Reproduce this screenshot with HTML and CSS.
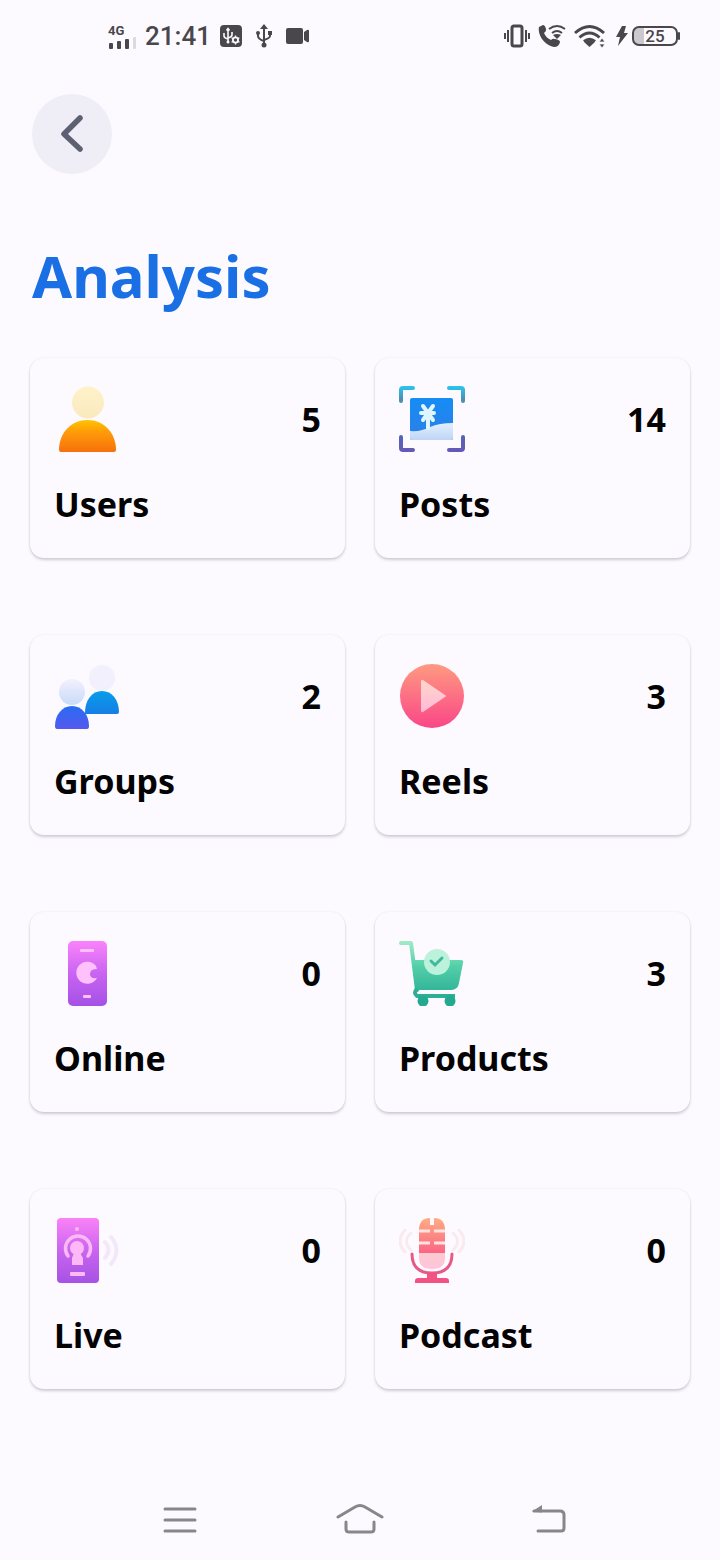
FILE: index.html
```html
<!DOCTYPE html>
<html lang="en">
<head>
<meta charset="utf-8">
<meta name="viewport" content="width=device-width, initial-scale=1">
<title>Analysis</title>
<link rel="stylesheet" href="styles.css">
</head>
<body>
<div class="screen">
  <div class="status">
    <div class="status-group">
      <div class="signal">
        <span class="network">4G</span>
        <svg width="28" height="12" viewBox="0 0 28 12" fill="#49474b"><rect x="1" y="6" width="4" height="6" rx="1"/><rect x="9" y="4" width="4" height="8" rx="1"/><rect x="17" y="2" width="4" height="10" rx="1"/><rect x="25" y="0" width="3" height="12" rx="1" fill="#dcdadd"/></svg>
      </div>
      <span class="clock">21:41</span>
      <svg width="22" height="22" viewBox="0 0 22 22"><rect width="22" height="22" rx="4" fill="#49474b"/><g fill="none" stroke="#fcfaff" stroke-width="1.6"><path d="M8 4V17M4 8v3q0 2 4 3M12 7v3q0 2-4 3M6.500 5.500 8 3.500l1.500 2"/><circle cx="15.500" cy="15" r="2.600" stroke-width="1.800"/><path d="M15.500 10.500v1.500M15.500 18v1.500M11.600 12.700l1.300.8M18.200 16.500l1.300.8M19.400 12.700l-1.300.8M12.900 16.500l-1.300.8" stroke-width="1.300"/></g><circle cx="8" cy="17" r="1.500" fill="#fcfaff"/></svg>
      <svg width="44" height="24" viewBox="0 0 44 24"><g fill="none" stroke="#49474b" stroke-width="2"><path d="M22 3v18M16 9v3q0 3 6 5M28 9v3q0 2-6 4"/></g><path d="M22 0l4 5h-8zM26 7h4v4h-4z" fill="#49474b"/><circle cx="16" cy="9" r="2" fill="#49474b"/><circle cx="22" cy="21" r="2.500" fill="#49474b"/></svg>
      <svg width="23" height="16" viewBox="0 0 23 16" fill="#49474b"><rect width="17" height="16" rx="2"/><path d="M18 4l3-2q2-1 2 1v10q0 2-2 1l-3-2z"/></svg>
    </div>
    <div class="status-group status-right">
      <svg width="26" height="24" viewBox="0 0 26 24" fill="none" stroke="#49474b" stroke-width="2"><rect x="8" y="2" width="10" height="20" rx="2" stroke-width="3"/><path d="M4 6v12M1 9v6M22 6v12M25 9v6"/></svg>
      <svg width="28" height="24" viewBox="0 0 28 24"><path d="M1 3 5 1q2 0 3 4 .5 2-2 4 2 5 7 7 2-2 4-1 5 1 5 3-1 5-6 5C8 22-1 12 1 3z" fill="#49474b"/><g fill="none" stroke="#49474b" stroke-width="2"><path d="M11 5q8-6 16 0M14 9q5-4 10 0"/></g><path d="M15 11q4-2 8 0l-4 4z" fill="#49474b"/></svg>
      <svg class="wifi" width="32" height="24" viewBox="0 0 32 24"><g fill="none" stroke="#49474b" stroke-width="3"><path d="M1 9q14.500-13 29 0M5.500 13.500q10-9 20 0M10 17.500q5.500-4.500 11 0"/></g><path d="M10.500 18.500q5-4 10 0L15.500 23z" fill="#49474b"/><path d="M28 14l3 4h-6zM25 20h6l-3 4z" fill="#49474b" stroke="#fcfaff" stroke-width=".8"/></svg>
      <svg width="14" height="22" viewBox="0 0 14 22"><path d="M7 1h4L9 8h4L3 21l2-9H1z" fill="#49474b"/></svg>
      <span class="battery">25</span>
    </div>
  </div>

  <header class="header">
    <button class="back" type="button" aria-label="Back"><svg width="40" height="40" viewBox="0 0 40 40"><path d="M28 4 12 20l16 15" transform="translate(0 0)" fill="none" stroke="#5d6072" stroke-width="5.500" stroke-linecap="round" stroke-linejoin="round"/></svg></button>
    <h1 class="title">Analysis</h1>
  </header>

  <main class="cards">
    <section class="card">
      <div class="card-top">
        <svg width="66" height="66" viewBox="0 0 66 66"><defs><linearGradient id="a1" x2="0" y2="1"><stop stop-color="#fff2c9"/><stop offset="1" stop-color="#f9e9bf"/></linearGradient><linearGradient id="a2" x2="0" y2="1"><stop stop-color="#ffc400"/><stop offset=".35" stop-color="#ff9d08"/><stop offset="1" stop-color="#f7700d"/></linearGradient></defs><circle cx="34" cy="16.500" r="16" fill="url(#a1)"/><path d="M5 64C5 47 17 34 33.500 34S62 47 62 64q0 2-2 2H7q-2 0-2-2z" fill="url(#a2)"/></svg>
        <span class="count">5</span>
      </div>
      <h2 class="label">Users</h2>
    </section>
    <section class="card">
      <div class="card-top">
        <svg width="66" height="66" viewBox="0 0 66 66"><defs><linearGradient id="b1" gradientUnits="userSpaceOnUse" x1="0" y1="0" x2="0" y2="66"><stop stop-color="#28c6f0"/><stop offset=".2" stop-color="#4c8fb5"/><stop offset=".8" stop-color="#5960b8"/><stop offset="1" stop-color="#6758b5"/></linearGradient><linearGradient id="b2" x2="0" y2="1"><stop stop-color="#168cf5"/><stop offset="1" stop-color="#2e7ee8"/></linearGradient><linearGradient id="b3" x2="0" y2="1"><stop stop-color="#e2f0ff"/><stop offset="1" stop-color="#bfd5f5"/></linearGradient></defs><path d="M2 15V4q0-2 2-2h10M50 2h12q2 0 2 2v11M2 51v11q0 2 2 2h10M50 64h12q2 0 2-2V51" fill="none" stroke="url(#b1)" stroke-width="4" stroke-linecap="round"/><rect x="11" y="12" width="43" height="42" rx="2" fill="url(#b2)"/><path d="M11 45q11 1 20-4 9-4 23-4v15q0 2-2 2H13q-2 0-2-2z" fill="url(#b3)"/><g stroke="#dff6ff" stroke-width="4" stroke-linecap="round"><path d="M29 27v15M22 27h13M24 20l10 14M34 20 24 34"/></g></svg>
        <span class="count">14</span>
      </div>
      <h2 class="label">Posts</h2>
    </section>
    <section class="card">
      <div class="card-top">
        <svg width="66" height="66" viewBox="0 0 66 66"><defs><linearGradient id="c1" x2="0" y2="1"><stop stop-color="#f2f0fd"/><stop offset="1" stop-color="#c9dbf9"/></linearGradient><linearGradient id="c2" x2="0" y2="1"><stop stop-color="#079de9"/><stop offset="1" stop-color="#167ee5"/></linearGradient><linearGradient id="c3" x2="0" y2="1"><stop stop-color="#286cf2"/><stop offset="1" stop-color="#5659ef"/></linearGradient></defs><circle cx="48" cy="15" r="13" fill="#f2f0fd"/><circle cx="18" cy="29" r="13" fill="url(#c1)"/><path d="M31 50C31 37 38 28 48 28s17 9 17 21q0 2-2 2H31z" fill="url(#c2)"/><path d="M1 63C1 52 8 43 18 43s17 9 17 20q0 3-2 3H3q-2 0-2-3z" fill="url(#c3)"/></svg>
        <span class="count">2</span>
      </div>
      <h2 class="label">Groups</h2>
    </section>
    <section class="card">
      <div class="card-top">
        <svg width="66" height="66" viewBox="0 0 66 66"><defs><linearGradient id="d1" x2="0" y2="1"><stop stop-color="#ff9a80"/><stop offset="1" stop-color="#fa4688"/></linearGradient><linearGradient id="d2" x2="0" y2="1"><stop stop-color="#ffd6cb"/><stop offset="1" stop-color="#ffb9d6"/></linearGradient></defs><circle cx="33" cy="33" r="32" fill="url(#d1)"/><path d="M22 19q0-3 2-2l22 15q2 1 0 2L24 49q-2 1-2-2z" fill="url(#d2)"/></svg>
        <span class="count">3</span>
      </div>
      <h2 class="label">Reels</h2>
    </section>
    <section class="card">
      <div class="card-top">
        <svg width="66" height="66" viewBox="0 0 66 66"><defs><linearGradient id="e1" x2="0" y2="1"><stop stop-color="#fb83fb"/><stop offset=".5" stop-color="#c964f2"/><stop offset="1" stop-color="#a451e5"/></linearGradient></defs><rect x="14" y="1" width="39" height="65" rx="5" fill="url(#e1)"/><g fill="#ffc1fb"><rect x="26" y="9" width="14" height="3" rx="1"/><path d="M42 26A11 11 0 1 0 43 38q-7 1-7-4t7-5z"/><rect x="29" y="55" width="8" height="3" rx="1"/></g></svg>
        <span class="count">0</span>
      </div>
      <h2 class="label">Online</h2>
    </section>
    <section class="card">
      <div class="card-top">
        <svg width="66" height="66" viewBox="0 0 66 66"><defs><linearGradient id="f1" gradientUnits="userSpaceOnUse" x1="0" y1="0" x2="0" y2="66"><stop stop-color="#a5ecc9"/><stop offset=".4" stop-color="#53cfa8"/><stop offset="1" stop-color="#1fa591"/></linearGradient></defs><path d="M2 3h10l6 47" fill="none" stroke="url(#f1)" stroke-width="4" stroke-linecap="round" stroke-linejoin="round"/><path d="M14 20h48q3 0 2 3l-4 20q-1 7-8 7H17z" fill="url(#f1)"/><path d="M18 49q-4 4 0 7h38" fill="none" stroke="#2caf96" stroke-width="4"/><circle cx="24" cy="61" r="5.500" fill="#24a991"/><circle cx="51" cy="61" r="5.500" fill="#24a991"/><circle cx="38" cy="22" r="13" fill="#bcf1dc"/><path d="m32 21 4 4 7-7" fill="none" stroke="#43b99c" stroke-width="3" stroke-linecap="round"/></svg>
        <span class="count">3</span>
      </div>
      <h2 class="label">Products</h2>
    </section>
    <section class="card">
      <div class="card-top">
        <svg width="66" height="66" viewBox="0 0 66 66"><defs><linearGradient id="g1" x2="0" y2="1"><stop stop-color="#fa82f7"/><stop offset=".5" stop-color="#c965ef"/><stop offset="1" stop-color="#a652e4"/></linearGradient></defs><rect x="3" y="1" width="42" height="65" rx="4" fill="url(#g1)"/><path d="M14 39a12.500 12.500 0 1 1 20 0" fill="none" stroke="#fcb9f5" stroke-width="3.500" stroke-linecap="round"/><g fill="#fcb9f5"><circle cx="23" cy="31" r="7"/><path d="M20 36h6l3 5v7H18v-7z"/><circle cx="23" cy="12" r="2"/><rect x="16" y="55" width="15" height="4" rx="1"/></g><path d="M51 25q7 8 0 16M57 20q11 13 0 27" fill="none" stroke="#f2e8fa" stroke-width="4" stroke-linecap="round"/></svg>
        <span class="count">0</span>
      </div>
      <h2 class="label">Live</h2>
    </section>
    <section class="card">
      <div class="card-top">
        <svg width="66" height="66" viewBox="0 0 66 66"><defs><linearGradient id="h1" x2="0" y2="1"><stop stop-color="#ffad82"/><stop offset="1" stop-color="#fa6387"/></linearGradient><linearGradient id="h2" x2="0" y2="1"><stop stop-color="#fbcbd0"/><stop offset="1" stop-color="#ffc4d9"/></linearGradient></defs><path d="M12 16q-9 8 0 17M6 13q-10 11 0 22M54 16q9 8 0 17M60 13q10 11 0 22" fill="none" stroke="#faeaf0" stroke-width="3" stroke-linecap="round"/><path d="M20 37V13Q20 1 31 1v7h4V1q11 0 11 12v24z" fill="url(#h1)"/><path d="M20 14h11M35 14h11M20 26h11M35 26h11" stroke="#ffe3df" stroke-width="3"/><path d="M20 36h26v5q0 11-13 11T20 41z" fill="url(#h2)"/><path d="M13 37q0 19 20 19t20-19" fill="none" stroke="#e85a86" stroke-width="3" stroke-linecap="round"/><path d="M28 56h10v5h9q3 0 3 3v2H16v-2q0-3 3-3h9z" fill="#f35383"/></svg>
        <span class="count">0</span>
      </div>
      <h2 class="label">Podcast</h2>
    </section>
  </main>

  <nav class="navbar">
    <button class="nav-button" type="button" aria-label="Recent apps"><svg width="48" height="36" viewBox="0 0 48 36"><path d="M9 7h30M9 18h30M9 29h30" fill="none" stroke="#88868a" stroke-width="3" stroke-linecap="round"/></svg></button>
    <button class="nav-button" type="button" aria-label="Home"><svg width="48" height="36" viewBox="0 0 48 36"><path d="m2 15 17-10q5-3 10 0l17 10M10 20v7q0 3 3 3h22q3 0 3-3v-7" fill="none" stroke="#88868a" stroke-width="3" stroke-linecap="round"/></svg></button>
    <button class="nav-button" type="button" aria-label="Back"><svg width="60" height="36" viewBox="0 0 60 36"><path d="M24 9h26q4 0 4 4v13q0 3-3 3H28" fill="none" stroke="#88868a" stroke-width="3" stroke-linecap="round"/><path d="M22 9.500 32 3v7.500z" fill="#88868a"/></svg></button>
  </nav>
</div>
</body>
</html>
```
FILE: styles.css
```css
* {
  box-sizing: border-box;
}

body {
  margin: 0;
  background: #fcfaff;
  color: #030304;
  font-family: "Noto Sans", "Open Sans", sans-serif;
}

svg {
  display: block;
  flex: none;
}

button {
  border: 0;
  padding: 0;
  background: none;
  cursor: pointer;
}

.screen {
  display: flex;
  flex-direction: column;
  min-height: 100vh;
}

.status {
  display: flex;
  justify-content: space-between;
  align-items: center;
  height: 72px;
  padding: 0 40px 0 108px;
  color: #49474b;
  font-family: Roboto, sans-serif;
}

.status-group {
  display: flex;
  align-items: center;
}

.signal {
  display: flex;
  flex-direction: column;
  margin-right: 9px;
}

.network {
  font-size: 13px;
  font-weight: 700;
  line-height: 13px;
}

.clock {
  margin-right: 9px;
  font-size: 26px;
  font-weight: 500;
  line-height: 32px;
}

.status-right {
  gap: 8px;
}

.wifi {
  margin-right: 1px;
}

.battery {
  position: relative;
  width: 46px;
  height: 20px;
  margin: 0 2px 0 -5px;
  border: 2px solid #49474b;
  border-radius: 7px;
  background: linear-gradient(90deg, #cbc9cd 10px, transparent 10px);
  font-size: 17px;
  font-weight: 500;
  line-height: 17px;
  text-align: center;
}

.battery::after {
  content: "";
  position: absolute;
  top: 4px;
  right: -4px;
  width: 2px;
  height: 8px;
  border-radius: 1px;
  background: #49474b;
}

.header {
  padding: 22px 32px 0;
}

.back {
  display: grid;
  place-items: center;
  width: 80px;
  height: 80px;
  border-radius: 50%;
  background: #efeef6;
}

.title {
  margin: 60px 0 0;
  color: #196fe3;
  font-size: 58px;
  font-weight: 700;
  line-height: 84px;
}

.cards {
  display: grid;
  grid-template-columns: 1fr 1fr;
  gap: 77px 30px;
  padding: 40px 30px;
}

.card {
  min-height: 200px;
  padding: 28px 24px;
  border-radius: 14px;
  box-shadow: 0 2px 3px rgba(40, 36, 50, 0.2), 0 0 2px rgba(40, 36, 50, 0.08);
  background: #fcfaff;
}

.card-top {
  display: flex;
  justify-content: space-between;
  align-items: center;
}

.count,
.label {
  font-size: 34px;
  font-weight: 700;
  line-height: 48px;
}

.label {
  margin: 28px 0 0;
}

.navbar {
  display: grid;
  grid-template-columns: repeat(3, 1fr);
  margin-top: auto;
  padding: 0 90px;
}

.nav-button {
  display: grid;
  place-items: center;
  height: 80px;
}
```
